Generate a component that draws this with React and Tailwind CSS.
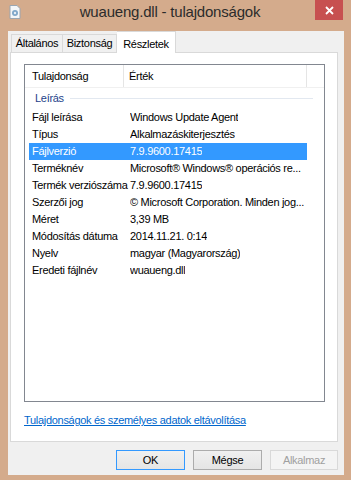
import React from 'react';

const rows = [
  ['Fájl leírása', 'Windows Update Agent'],
  ['Típus', 'Alkalmazáskiterjesztés'],
  ['Fájlverzió', '7.9.9600.17415'],
  ['Terméknév', 'Microsoft® Windows® operációs re...'],
  ['Termék verziószáma', '7.9.9600.17415'],
  ['Szerzői jog', '© Microsoft Corporation. Minden jog...'],
  ['Méret', '3,39 MB'],
  ['Módosítás dátuma', '2014.11.21. 0:14'],
  ['Nyelv', 'magyar (Magyarország)'],
  ['Eredeti fájlnév', 'wuaueng.dll'],
];

const FileIcon = () => (
  <svg width="12" height="14" viewBox="0 0 12 14">
    <path d="M1 0.5h7l3 3v10H1z" fill="#f4f6f8" stroke="#9aa6b2" />
    <circle cx="6" cy="8" r="3" fill="#7fa7c9" />
    <circle cx="6" cy="8" r="1.2" fill="#e8eef4" />
  </svg>
);

const App = () => {
  return (
    <div
      className="w-[351px] h-[480px] bg-[#d4ab8c] flex flex-col overflow-hidden text-[11px] tracking-[-0.3px] text-black"
      style={{ fontFamily: '"Liberation Sans", Arial, sans-serif' }}
    >
      {/* címsor */}
      <div className="h-[31px] flex items-start relative">
        <div className="pl-[9px] pt-[5px]">
          <FileIcon />
        </div>
        <div className="flex-1 text-center text-[15px] tracking-[-0.2px] leading-[24px] text-[#2b2b2b] pl-[4px]">
          wuaueng.dll - tulajdonságok
        </div>
        <div className="w-[28px] h-[20px] bg-[#c75050] mr-[8px] flex items-center justify-center">
          <svg width="9" height="9" viewBox="0 0 9 9">
            <path d="M1 1l7 7M8 1l-7 7" stroke="#fff" strokeWidth="1.8" />
          </svg>
        </div>
      </div>

      {/* ablak tartalom */}
      <div className="ml-[8px] mr-[7px] h-[444px] bg-[#f0f0f0] flex flex-col">
        {/* fülek */}
        <div className="h-[21px] flex items-end pl-[3px] relative z-10">
          <div className="h-[18px] w-[52px] border border-b-0 border-[#d9d9d9] bg-[#f0f0f0] flex items-center justify-center">
            Általános
          </div>
          <div className="h-[18px] w-[54px] border border-b-0 border-l-0 border-[#d9d9d9] bg-[#f0f0f0] flex items-center justify-center">
            Biztonság
          </div>
          <div className="h-[22px] w-[59px] -mb-[1px] border border-b-0 border-l-0 border-[#d9d9d9] bg-white flex items-start pt-[4px] justify-center">
            Részletek
          </div>
        </div>

        <div className="ml-[2px] mr-[6px] h-[390px] bg-white border border-[#d9d9d9] flex flex-col">
          {/* lista */}
          <div className="ml-[13px] mt-[11px] w-[301px] h-[338px] border border-[#828790] flex flex-col">
            <div className="h-[23px] flex items-center border-b border-[#f0f0f0]">
              <div className="w-[99px] shrink-0 pl-[7px] h-full flex items-center border-r border-[#e5e5e5]">Tulajdonság</div>
              <div className="w-[183px] shrink-0 pl-[5px] h-full flex items-center border-r border-[#e5e5e5]">Érték</div>
            </div>
            <div className="h-[21px] flex items-center pl-[10px] pr-[11px] gap-[6px]">
              <span className="text-[#1e3f8a]">Leírás</span>
              <div className="flex-1 h-px bg-[#e2e8f0]" />
            </div>
            {rows.map(([name, value]) => {
              const selected = name === 'Fájlverzió';
              return (
                <div
                  key={name}
                  className={`ml-[4px] w-[278px] h-[17px] flex items-center ${selected ? 'bg-[#3399ff] text-white' : ''}`}
                >
                  <div className="w-[101px] shrink-0 pl-[3px] whitespace-nowrap">{name}</div>
                  <div className="whitespace-nowrap overflow-hidden">{value}</div>
                </div>
              );
            })}
          </div>

          <div className="ml-[13px] mt-[10px]">
            <span className="text-[#0066cc] underline">Tulajdonságok és személyes adatok eltávolítása</span>
          </div>
        </div>

        {/* gombok */}
        <div className="flex justify-end gap-[8px] mt-[8px] mr-[6px]">
          <button className="w-[69px] h-[20px] border border-[#3399ff] bg-gradient-to-b from-[#f0f0f0] to-[#e5e5e5]">
            OK
          </button>
          <button className="w-[69px] h-[20px] border border-[#acacac] bg-gradient-to-b from-[#f0f0f0] to-[#e5e5e5]">
            Mégse
          </button>
          <button className="w-[68px] h-[20px] border border-[#d9d9d9] bg-[#f4f4f4] text-[#a0a0a0]">
            Alkalmaz
          </button>
        </div>
      </div>
    </div>
  );
};

export default App;
